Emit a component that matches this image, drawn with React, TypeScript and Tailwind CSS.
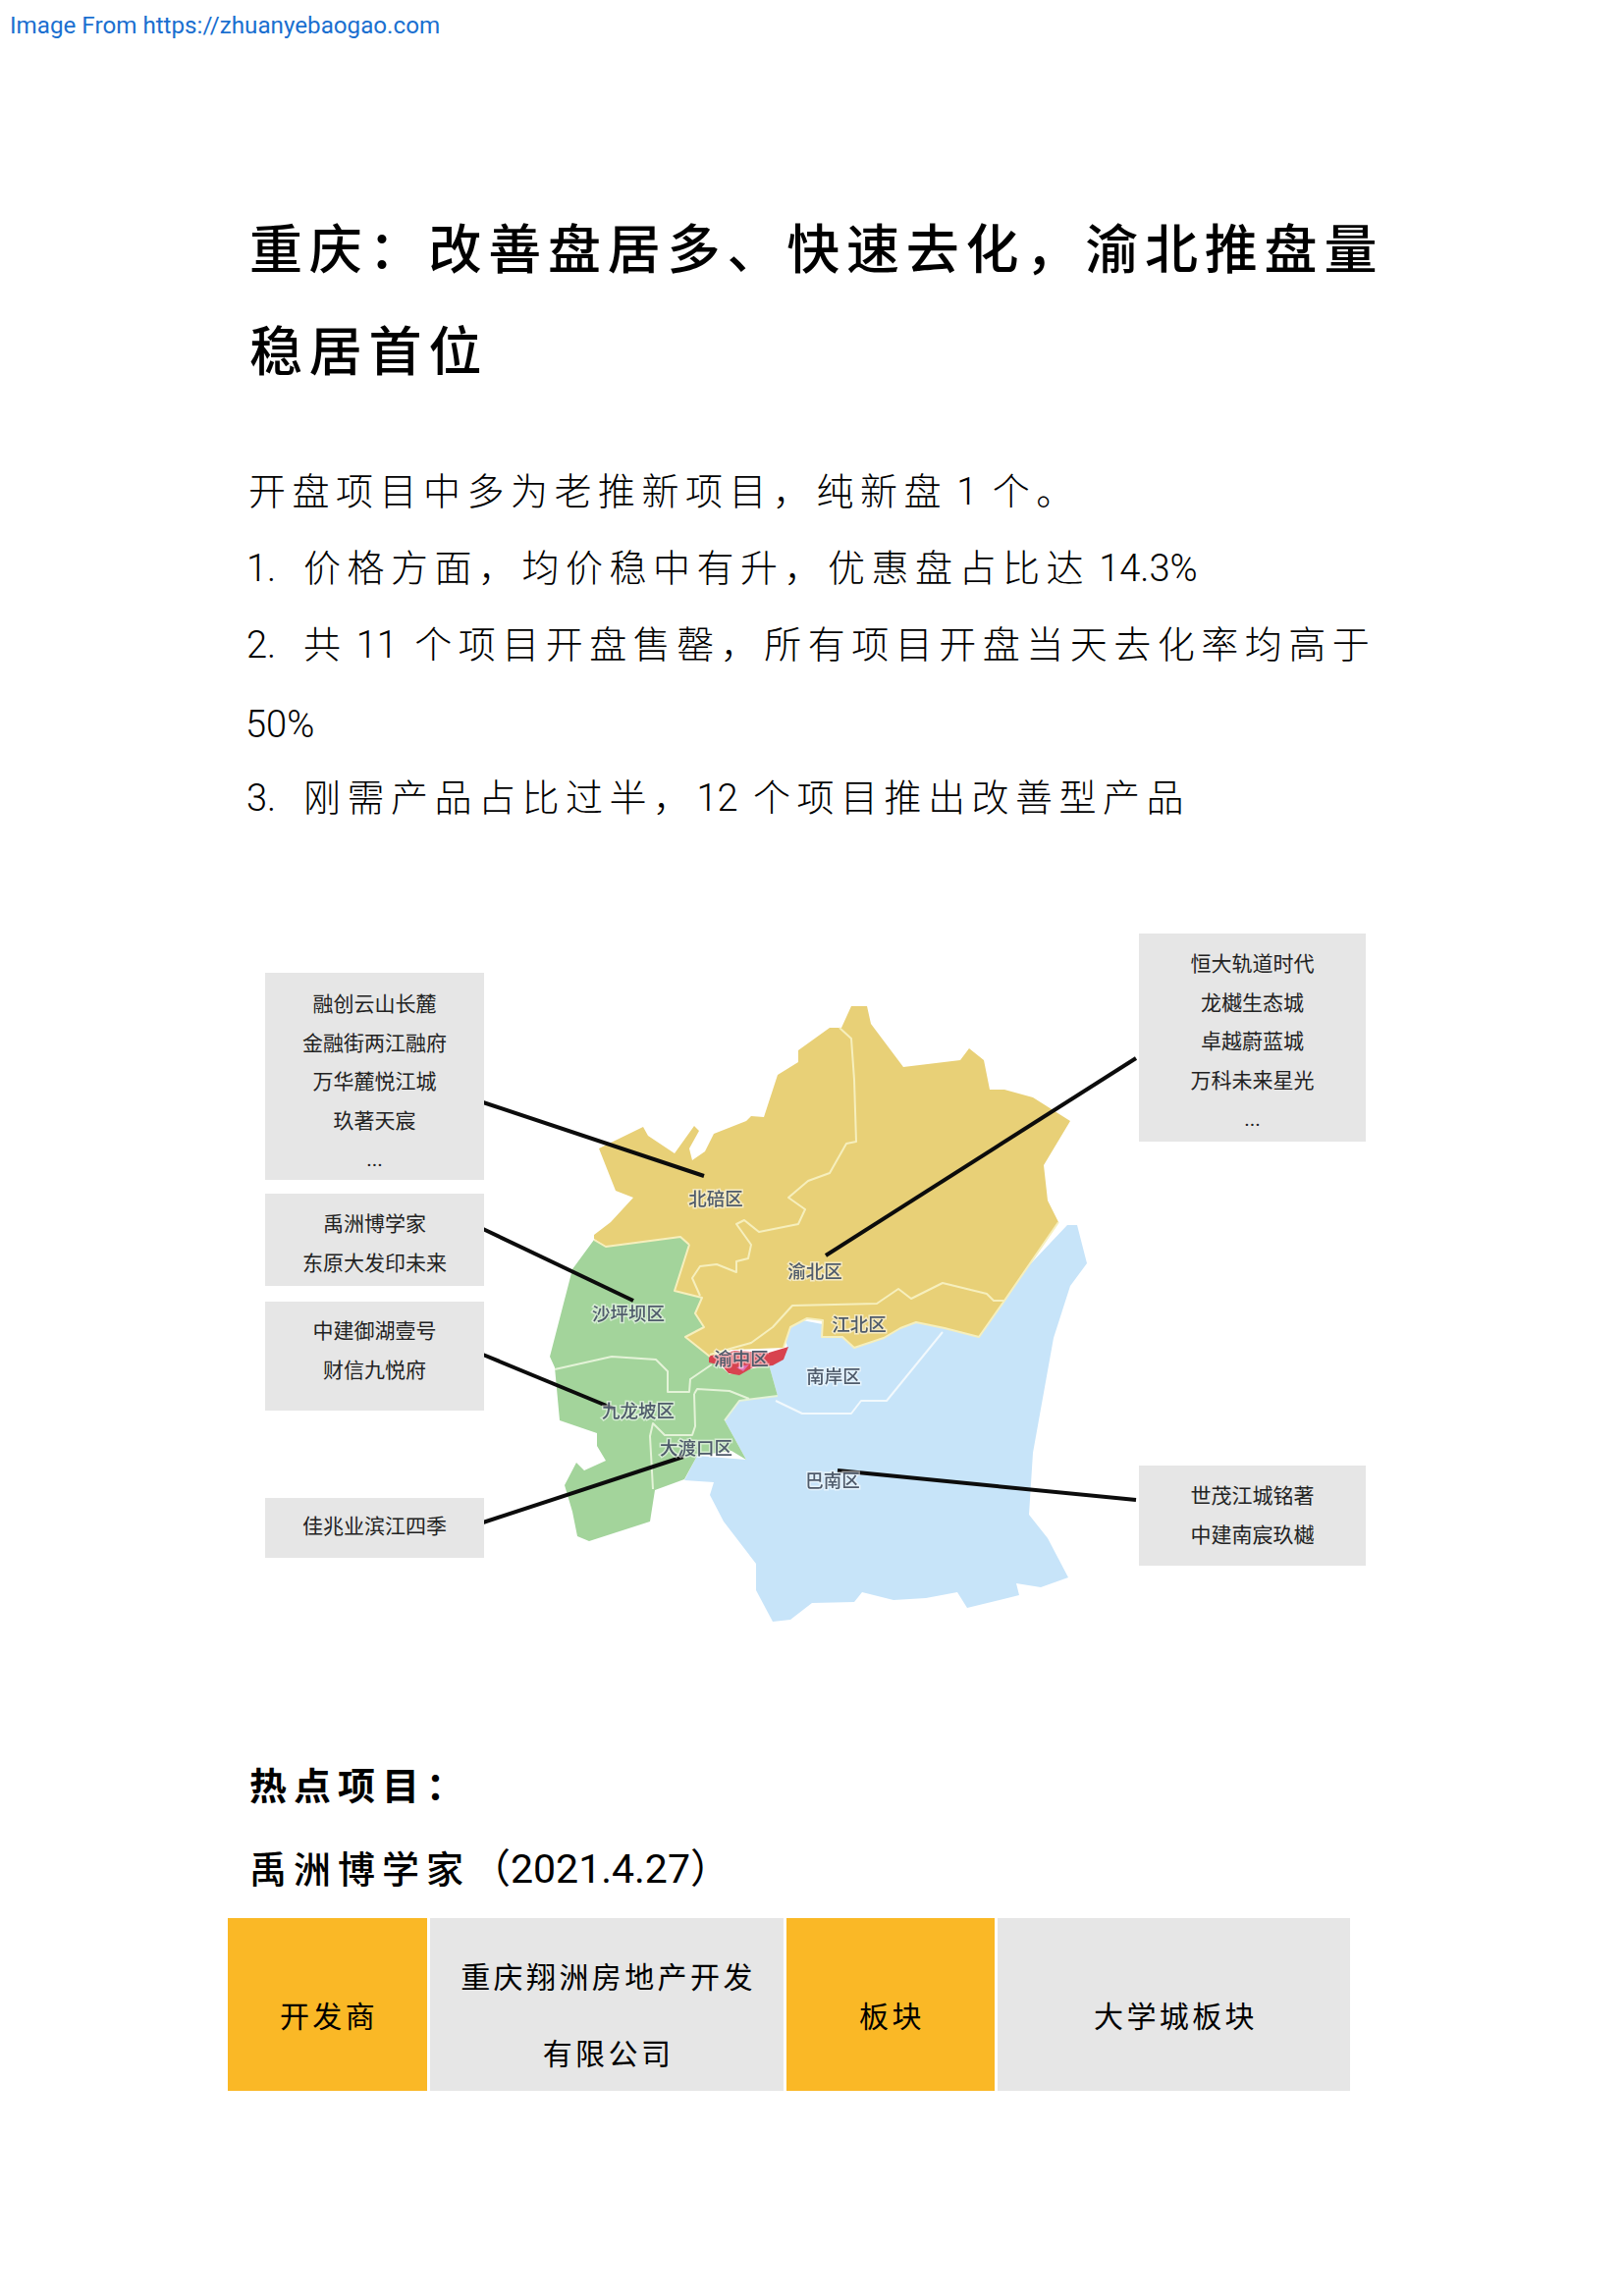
import React from 'react';

const FONT = 'font-[Roboto,"Noto_Sans_CJK_SC",sans-serif]';

// full-width punctuation, written as escapes so it can't get normalised away
const COMMA = '\uFF0C';
const COLON = '\uFF1A';
const LPAREN = '\uFF08';
const RPAREN = '\uFF09';

const boxes = [
    { pos: 'left-[270px] top-[51px] w-[223px] h-[211px] pt-[13px]', lines: ['融创云山长麓', '金融街两江融府', '万华麓悦江城', '玖著天宸', '...'] },
    { pos: 'left-[270px] top-[276px] w-[223px] h-[94px] pt-[12px]', lines: ['禹洲博学家', '东原大发印未来'] },
    { pos: 'left-[270px] top-[386px] w-[223px] h-[111px] pt-[11px]', lines: ['中建御湖壹号', '财信九悦府'] },
    { pos: 'left-[270px] top-[586px] w-[223px] h-[61px] pt-[10px]', lines: ['佳兆业滨江四季'] },
    { pos: 'left-[1160px] top-[11px] w-[231px] h-[212px] pt-[12px]', lines: ['恒大轨道时代', '龙樾生态城', '卓越蔚蓝城', '万科未来星光', '...'] },
    { pos: 'left-[1160px] top-[553px] w-[231px] h-[102px] pt-[12px]', lines: ['世茂江城铭著', '中建南宸玖樾'] },
];

const regionLabels: [string, number, number][] = [
    ['北碚区', 729, 1222],
    ['渝北区', 830, 1296],
    ['沙坪坝区', 640, 1339],
    ['江北区', 875, 1350],
    ['渝中区', 755, 1385],
    ['南岸区', 849, 1403],
    ['九龙坡区', 650, 1438],
    ['大渡口区', 709, 1476],
    ['巴南区', 848, 1509],
];

const leaders = [
    [492, 1123, 717, 1198],
    [492, 1252, 645, 1325],
    [492, 1380, 625, 1435],
    [492, 1551, 696, 1484],
    [1157, 1078, 841, 1279],
    [1157, 1528, 853, 1498],
];

const yellowLines = [
    'M855 1047 L867 1058 L870 1100 L872 1163 L862 1165 L845 1195 L823 1203 L803 1220 L820 1232 L813 1247 L773 1255 L758 1243 L750 1247 L765 1268 L762 1282 L750 1285 L750 1296 L730 1288 L713 1290 L705 1302 L713 1320',
    'M1023 1325 L1012 1325 L1005 1318 L960 1307 L928 1323 L915 1313 L893 1328 L807 1330 L787 1352 L765 1368 L747 1373 L723 1380',
    'M702 1268 L687 1315 L715 1322 L708 1338 L717 1352 L698 1362 L723 1382 M605 1263 L617 1270 L693 1260 L702 1268',
    'M1078 1245 L1023 1325 L997 1362 L962 1353 L933 1347 L917 1353 L900 1363 L870 1373 L858 1362 L837 1362 L838 1345 L822 1343 L805 1352 L798 1373',
];

const greenLines = [
    'M565 1395 L623 1382 L668 1385 L680 1397 L680 1418 L702 1418 L703 1405 L725 1390',
    'M707 1420 L710 1415 L743 1417 L763 1425 M707 1420 L708 1453 L705 1462 L677 1462 L665 1450 L662 1463 L665 1517',
    'M738 1447 L753 1427 L792 1422',
];

const blueLines = ['M960 1357 L903 1427 L877 1427 L867 1440 L817 1440 L790 1427'];

function DistrictMap() {
    return (
        <svg className="absolute inset-0 w-full h-full blur-[0.6px]" viewBox="0 940 1654 740">
            <path
                fill="#c7e4f9"
                d="M1087 1248 L1097 1248 L1107 1287 L1090 1310 L1073 1363 L1052 1480 L1048 1543 L1067 1567 L1088 1607 L1060 1617 L1035 1613 L1038 1625 L985 1638 L975 1622 L943 1628 L910 1630 L878 1622 L870 1632 L827 1633 L805 1650 L787 1652 L770 1620 L770 1593 L737 1550 L723 1523 L727 1510 L697 1508 L710 1483 L760 1487 L738 1447 L753 1427 L792 1422 L783 1390 L802 1373 L798 1355 L817 1345 L843 1350 L1000 1340 Z"
            />
            <path
                fill="#a3d49b"
                d="M605 1263 L617 1270 L693 1260 L702 1268 L687 1315 L715 1322 L708 1338 L717 1352 L698 1362 L723 1382 L743 1400 L783 1390 L792 1422 L753 1427 L738 1447 L760 1487 L745 1478 L710 1483 L697 1507 L667 1518 L662 1550 L600 1570 L588 1565 L583 1540 L575 1513 L587 1490 L595 1498 L617 1488 L608 1473 L608 1460 L570 1447 L565 1393 L560 1382 L583 1293 Z"
            />
            <path
                fill="#e8d077"
                d="M605 1258 L622 1245 L645 1220 L627 1213 L610 1170 L655 1148 L660 1157 L687 1175 L707 1147 L712 1152 L702 1170 L705 1182 L718 1173 L727 1155 L760 1142 L765 1137 L778 1138 L792 1095 L813 1082 L813 1070 L845 1047 L857 1047 L867 1025 L883 1025 L887 1043 L920 1087 L978 1080 L987 1068 L1002 1080 L1008 1110 L1023 1110 L1052 1118 L1090 1142 L1063 1187 L1067 1223 L1078 1245 L1023 1325 L997 1362 L962 1353 L933 1347 L917 1353 L900 1363 L870 1373 L858 1362 L837 1362 L838 1345 L822 1343 L805 1352 L798 1373 L745 1375 L723 1382 L698 1362 L717 1352 L708 1338 L715 1322 L687 1315 L702 1268 L693 1260 L617 1270 L605 1262 Z"
            />
            <path
                fill="#d8434f"
                d="M722 1381 L733 1380 L748 1376 L783 1378 L803 1372 L798 1385 L787 1391 L767 1393 L753 1401 L742 1399 L735 1391 L722 1388 Z"
            />
            <path fill="#e06bb0" d="M750 1393 L763 1390 L757 1397 Z" />
            {yellowLines.map((d, i) => (
                <path key={i} d={d} fill="none" stroke="#f6efbd" strokeWidth="2" strokeLinejoin="round" />
            ))}
            {greenLines.map((d, i) => (
                <path key={i} d={d} fill="none" stroke="#e4f3d8" strokeWidth="2" strokeLinejoin="round" />
            ))}
            {blueLines.map((d, i) => (
                <path key={i} d={d} fill="none" stroke="#f2f9fd" strokeWidth="2" strokeLinejoin="round" />
            ))}
            {leaders.map(([x1, y1, x2, y2], i) => (
                <line key={i} x1={x1} y1={y1} x2={x2} y2={y2} stroke="#0c0c0c" strokeWidth="4" />
            ))}
            {regionLabels.map(([name, x, y]) => (
                <text
                    key={name}
                    x={x}
                    y={y}
                    textAnchor="middle"
                    dominantBaseline="central"
                    stroke="#ffffff"
                    strokeOpacity="0.55"
                    strokeWidth="3"
                    paintOrder="stroke"
                    className="text-[18.5px] font-medium fill-[#4f5b6b]"
                >
                    {name}
                </text>
            ))}
        </svg>
    );
}

export default function App() {
    return (
        <div className={`w-[1654px] h-[2339px] bg-white text-black overflow-hidden ${FONT}`}>
            <div className="pt-[10px] pl-[10px] h-[204px] text-[24.2px] leading-[32px] text-[#1a6fd0]">
                Image From https://zhuanyebaogao.com
            </div>

            <h1 className="pl-[254px] text-[54px] leading-[103.5px] font-medium tracking-[6.8px]">
                <div>{`重庆${COLON}改善盘居多、快速去化${COMMA}渝北推盘量`}</div>
                <div>稳居首位</div>
            </h1>

            <div className="mt-[51px] pl-[253px] text-[38px] leading-[78px] tracking-[6.5px] font-light">
                <div>{`开盘项目中多为老推新项目${COMMA}纯新盘`}<span className="tracking-normal pr-[6px]"> 1 </span>个。</div>
                <div><span className="tracking-normal mr-[12px] -ml-[2px]">1.</span> {`价格方面${COMMA}均价稳中有升${COMMA}优惠盘占比达`}<span className="tracking-normal"> 14.3%</span></div>
                <div><span className="tracking-normal mr-[12px] -ml-[2px]">2.</span> 共<span className="tracking-normal pr-[8px]"> 11 </span>{`个项目开盘售罄${COMMA}所有项目开盘当天去化率均高于`}</div>
                <div className="tracking-normal h-[78px] pt-[3px] -ml-[3px]">50%</div>
                <div><span className="tracking-normal mr-[12px] -ml-[2px]">3.</span> {`刚需产品占比过半${COMMA}`}<span className="tracking-normal pr-[6px]">12 </span>个项目推出改善型产品</div>
            </div>

            <div className="relative mt-[88px] h-[740px]">
                <DistrictMap />
                {boxes.map((box, i) => (
                    <div key={i} className={`absolute bg-[#e6e6e6] text-center text-[21px] leading-[39.5px] text-[#222222] ${box.pos}`}>
                        {box.lines.map((line) => (
                            <div key={line}>{line}</div>
                        ))}
                    </div>
                ))}
            </div>

            <div className="mt-[98px] pl-[254px] text-[38px] leading-[84px] tracking-[7px] font-bold">{`热点项目${COLON}`}</div>
            <div className="pl-[254px] text-[38px] leading-[84px] tracking-[7px] font-medium">
                禹洲博学家<span className="tracking-normal font-normal text-[41px]">{`${LPAREN}2021.4.27${RPAREN}`}</span>
            </div>

            <div className="ml-[232px] mt-[7px] w-[1142px] grid grid-cols-[203px_360px_212px_359px] grid-rows-[176px] gap-x-[3px] text-[30px] leading-[78px] tracking-[3.4px] text-center">
                <div className="bg-[#fab826] flex items-center justify-center pt-[26px] pl-[3px]">开发商</div>
                <div className="bg-[#e6e6e6] pt-[22px] pl-[3px]">
                    <div>重庆翔洲房地产开发</div>
                    <div>有限公司</div>
                </div>
                <div className="bg-[#fab826] flex items-center justify-center pt-[26px] pl-[3px]">板块</div>
                <div className="bg-[#e6e6e6] flex items-center justify-center pt-[26px] pl-[4px]">大学城板块</div>
            </div>
        </div>
    );
}
